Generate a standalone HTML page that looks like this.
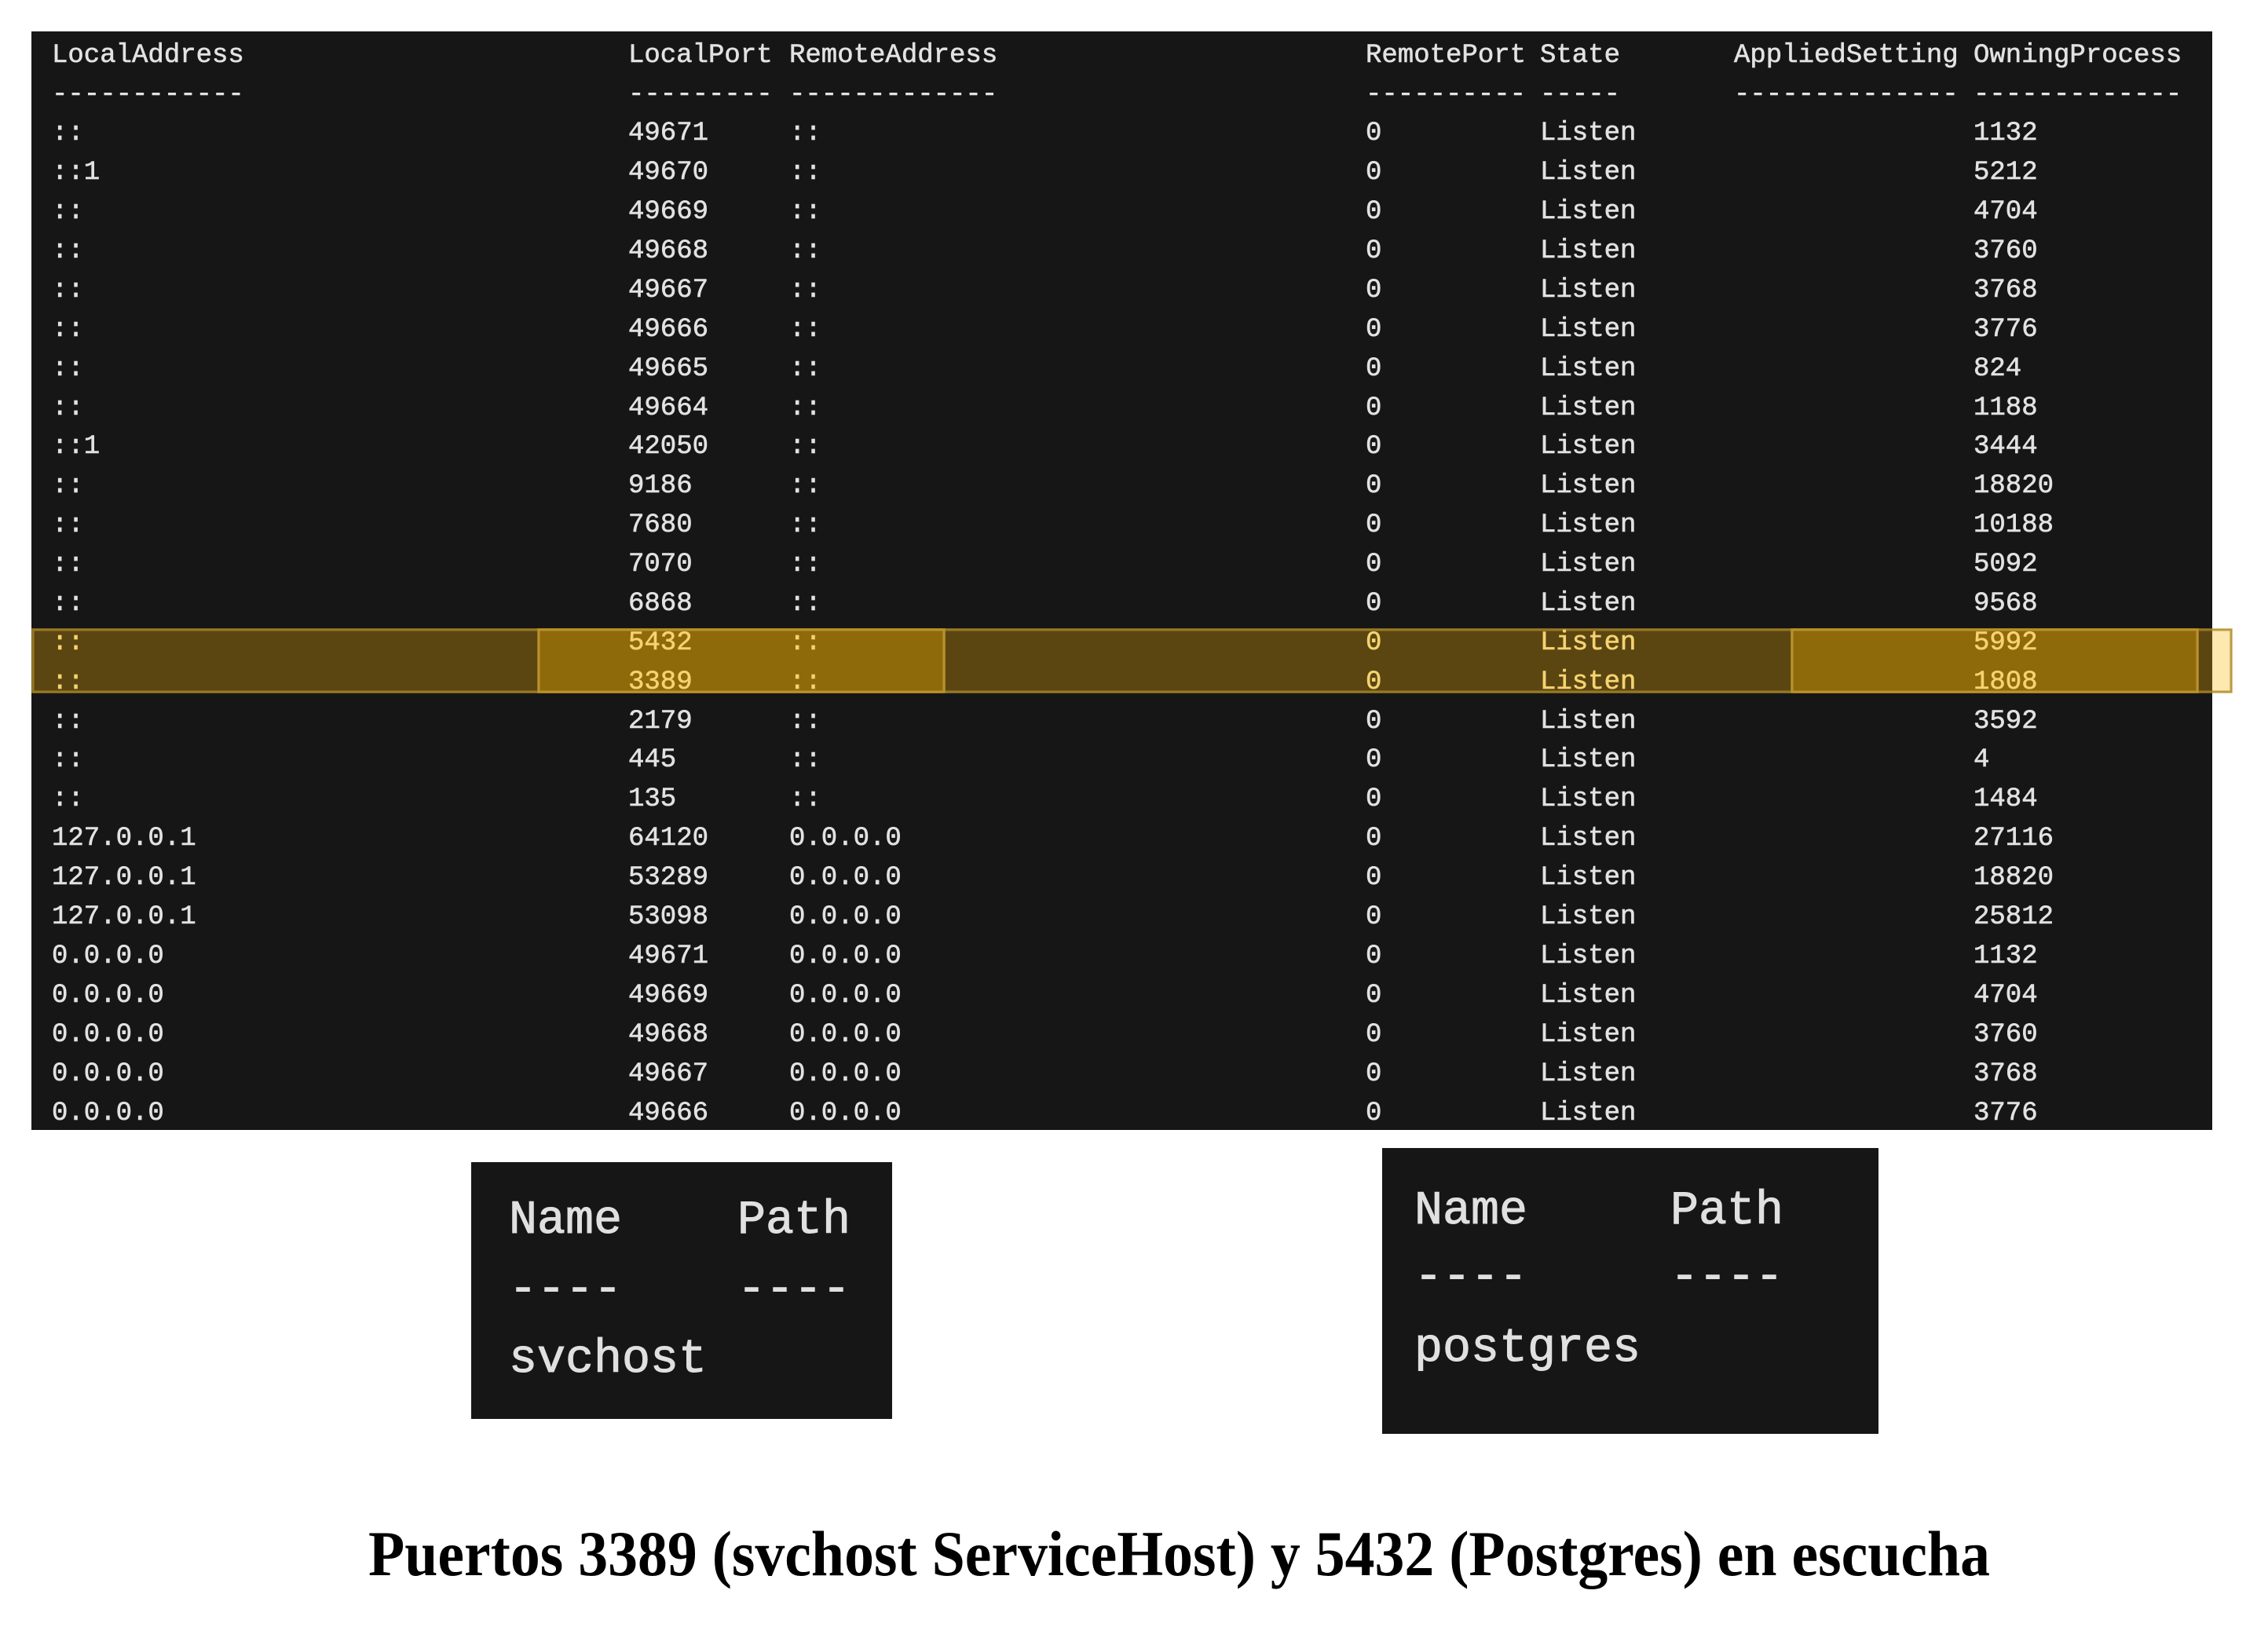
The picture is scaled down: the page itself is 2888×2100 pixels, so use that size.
<!DOCTYPE html>
<html><head><meta charset="utf-8"><style>
html,body{margin:0;padding:0;background:#fff;width:2888px;height:2100px;overflow:hidden}
svg{display:block}
.m{font-family:"Liberation Mono",monospace;font-size:34px;fill:#e2e2e2;stroke:#e2e2e2;stroke-width:0.6}
.h{fill:#f5d36f;stroke:#f5d36f}
.b{font-family:"Liberation Mono",monospace;font-size:60px;fill:#e0e0e0;stroke:#e0e0e0;stroke-width:1}
.c{font-family:"Liberation Serif",serif;font-weight:bold;font-size:82px;fill:#000}
</style></head><body>
<svg width="2888" height="2100" viewBox="0 0 2888 2100" xmlns="http://www.w3.org/2000/svg">
<rect x="40" y="40" width="2777" height="1399" fill="#161616"/>
<rect x="2817" y="800" width="26" height="83" fill="#fde8b0"/>
<rect x="40" y="800" width="2777" height="83" fill="#5b4612"/>
<rect x="684" y="800" width="520" height="83" fill="#8e6a0b"/>
<rect x="2280" y="800" width="520" height="83" fill="#8e6a0b"/>
<rect x="42" y="802" width="2799" height="79" fill="none" stroke="#a8862c" stroke-width="3" opacity="0.8"/>
<rect x="686" y="802" width="516" height="79" fill="none" stroke="#b8922e" stroke-width="3"/>
<rect x="2282" y="802" width="516" height="79" fill="none" stroke="#b8922e" stroke-width="3"/>
<g class="m">
<text x="66" y="79">LocalAddress</text><text x="800" y="79">LocalPort</text><text x="1005" y="79">RemoteAddress</text><text x="1739" y="79">RemotePort</text><text x="1961" y="79">State</text><text x="2208" y="79">AppliedSetting</text><text x="2513" y="79">OwningProcess</text>
<text x="66" y="129">------------</text><text x="800" y="129">---------</text><text x="1005" y="129">-------------</text><text x="1739" y="129">----------</text><text x="1961" y="129">-----</text><text x="2208" y="129">--------------</text><text x="2513" y="129">-------------</text>
</g>
<rect x="600" y="1480" width="536" height="327" fill="#161616"/>
<rect x="1760" y="1462" width="632" height="364" fill="#161616"/>
<g class="b">
<text x="648" y="1570">Name</text><text x="939" y="1570">Path</text>
<text x="648" y="1658">----</text><text x="939" y="1658">----</text>
<text x="648" y="1747">svchost</text>
<text x="1801" y="1558">Name</text><text x="2127" y="1558">Path</text>
<text x="1801" y="1642">----</text><text x="2127" y="1642">----</text>
<text x="1801" y="1733">postgres</text>
</g>
<text class="c" x="469" y="2006" textLength="2065" lengthAdjust="spacingAndGlyphs">Puertos 3389 (svchost ServiceHost) y 5432 (Postgres) en escucha</text>
<g class="m">
<text x="66" y="178">::</text><text x="800" y="178">49671</text><text x="1005" y="178">::</text><text x="1739" y="178">0</text><text x="1961" y="178">Listen</text><text x="2513" y="178">1132</text>
<text x="66" y="228">::1</text><text x="800" y="228">49670</text><text x="1005" y="228">::</text><text x="1739" y="228">0</text><text x="1961" y="228">Listen</text><text x="2513" y="228">5212</text>
<text x="66" y="278">::</text><text x="800" y="278">49669</text><text x="1005" y="278">::</text><text x="1739" y="278">0</text><text x="1961" y="278">Listen</text><text x="2513" y="278">4704</text>
<text x="66" y="328">::</text><text x="800" y="328">49668</text><text x="1005" y="328">::</text><text x="1739" y="328">0</text><text x="1961" y="328">Listen</text><text x="2513" y="328">3760</text>
<text x="66" y="378">::</text><text x="800" y="378">49667</text><text x="1005" y="378">::</text><text x="1739" y="378">0</text><text x="1961" y="378">Listen</text><text x="2513" y="378">3768</text>
<text x="66" y="428">::</text><text x="800" y="428">49666</text><text x="1005" y="428">::</text><text x="1739" y="428">0</text><text x="1961" y="428">Listen</text><text x="2513" y="428">3776</text>
<text x="66" y="478">::</text><text x="800" y="478">49665</text><text x="1005" y="478">::</text><text x="1739" y="478">0</text><text x="1961" y="478">Listen</text><text x="2513" y="478">824</text>
<text x="66" y="528">::</text><text x="800" y="528">49664</text><text x="1005" y="528">::</text><text x="1739" y="528">0</text><text x="1961" y="528">Listen</text><text x="2513" y="528">1188</text>
<text x="66" y="577">::1</text><text x="800" y="577">42050</text><text x="1005" y="577">::</text><text x="1739" y="577">0</text><text x="1961" y="577">Listen</text><text x="2513" y="577">3444</text>
<text x="66" y="627">::</text><text x="800" y="627">9186</text><text x="1005" y="627">::</text><text x="1739" y="627">0</text><text x="1961" y="627">Listen</text><text x="2513" y="627">18820</text>
<text x="66" y="677">::</text><text x="800" y="677">7680</text><text x="1005" y="677">::</text><text x="1739" y="677">0</text><text x="1961" y="677">Listen</text><text x="2513" y="677">10188</text>
<text x="66" y="727">::</text><text x="800" y="727">7070</text><text x="1005" y="727">::</text><text x="1739" y="727">0</text><text x="1961" y="727">Listen</text><text x="2513" y="727">5092</text>
<text x="66" y="777">::</text><text x="800" y="777">6868</text><text x="1005" y="777">::</text><text x="1739" y="777">0</text><text x="1961" y="777">Listen</text><text x="2513" y="777">9568</text>
<g class="h">
<text x="66" y="827">::</text><text x="800" y="827">5432</text><text x="1005" y="827">::</text><text x="1739" y="827">0</text><text x="1961" y="827">Listen</text><text x="2513" y="827">5992</text>
<text x="66" y="877">::</text><text x="800" y="877">3389</text><text x="1005" y="877">::</text><text x="1739" y="877">0</text><text x="1961" y="877">Listen</text><text x="2513" y="877">1808</text>
</g>
<text x="66" y="927">::</text><text x="800" y="927">2179</text><text x="1005" y="927">::</text><text x="1739" y="927">0</text><text x="1961" y="927">Listen</text><text x="2513" y="927">3592</text>
<text x="66" y="976">::</text><text x="800" y="976">445</text><text x="1005" y="976">::</text><text x="1739" y="976">0</text><text x="1961" y="976">Listen</text><text x="2513" y="976">4</text>
<text x="66" y="1026">::</text><text x="800" y="1026">135</text><text x="1005" y="1026">::</text><text x="1739" y="1026">0</text><text x="1961" y="1026">Listen</text><text x="2513" y="1026">1484</text>
<text x="66" y="1076">127.0.0.1</text><text x="800" y="1076">64120</text><text x="1005" y="1076">0.0.0.0</text><text x="1739" y="1076">0</text><text x="1961" y="1076">Listen</text><text x="2513" y="1076">27116</text>
<text x="66" y="1126">127.0.0.1</text><text x="800" y="1126">53289</text><text x="1005" y="1126">0.0.0.0</text><text x="1739" y="1126">0</text><text x="1961" y="1126">Listen</text><text x="2513" y="1126">18820</text>
<text x="66" y="1176">127.0.0.1</text><text x="800" y="1176">53098</text><text x="1005" y="1176">0.0.0.0</text><text x="1739" y="1176">0</text><text x="1961" y="1176">Listen</text><text x="2513" y="1176">25812</text>
<text x="66" y="1226">0.0.0.0</text><text x="800" y="1226">49671</text><text x="1005" y="1226">0.0.0.0</text><text x="1739" y="1226">0</text><text x="1961" y="1226">Listen</text><text x="2513" y="1226">1132</text>
<text x="66" y="1276">0.0.0.0</text><text x="800" y="1276">49669</text><text x="1005" y="1276">0.0.0.0</text><text x="1739" y="1276">0</text><text x="1961" y="1276">Listen</text><text x="2513" y="1276">4704</text>
<text x="66" y="1326">0.0.0.0</text><text x="800" y="1326">49668</text><text x="1005" y="1326">0.0.0.0</text><text x="1739" y="1326">0</text><text x="1961" y="1326">Listen</text><text x="2513" y="1326">3760</text>
<text x="66" y="1376">0.0.0.0</text><text x="800" y="1376">49667</text><text x="1005" y="1376">0.0.0.0</text><text x="1739" y="1376">0</text><text x="1961" y="1376">Listen</text><text x="2513" y="1376">3768</text>
<text x="66" y="1426">0.0.0.0</text><text x="800" y="1426">49666</text><text x="1005" y="1426">0.0.0.0</text><text x="1739" y="1426">0</text><text x="1961" y="1426">Listen</text><text x="2513" y="1426">3776</text>
</g>
</svg>
</body></html>
